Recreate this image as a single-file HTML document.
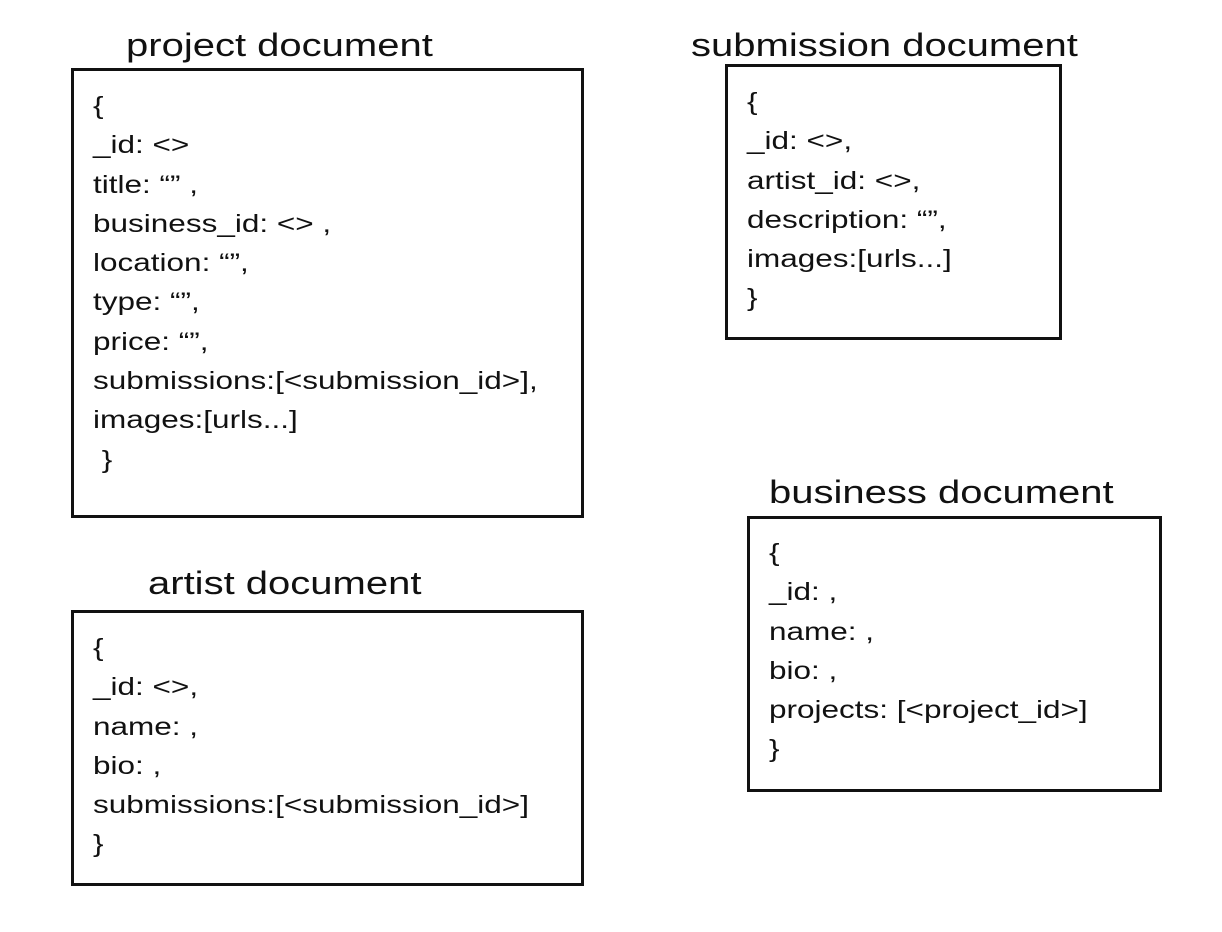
<!DOCTYPE html>
<html><head><meta charset="utf-8"><style>
body{margin:0;width:1222px;height:932px;background:#fff;position:relative;overflow:hidden;font-family:"Liberation Sans",sans-serif;color:#111}
.box{position:absolute;border:3px solid #111;box-sizing:border-box}
.t{position:absolute;font-size:32px;line-height:36px;white-space:nowrap;transform:scaleX(1.25);transform-origin:0 50%}
.b{position:absolute;font-size:25px;line-height:39.3px;white-space:pre;transform:scaleX(1.26);transform-origin:0 0}
</style></head><body>
<div class="t" style="left:126px;top:27px">project document</div>
<div class="box" style="left:71px;top:68px;width:513px;height:450px"></div>
<div class="b" style="left:93px;top:87px">{
_id: &lt;&gt;
title: “” ,
business_id: &lt;&gt; ,
location: “”,
type: “”,
price: “”,
submissions:[&lt;submission_id&gt;],
images:[urls...]
 }</div>

<div class="t" style="left:148px;top:565px">artist document</div>
<div class="box" style="left:71px;top:610px;width:513px;height:276px"></div>
<div class="b" style="left:93px;top:629px">{
_id: &lt;&gt;,
name: ,
bio: ,
submissions:[&lt;submission_id&gt;]
}</div>

<div class="t" style="left:691px;top:27px">submission document</div>
<div class="box" style="left:725px;top:64px;width:337px;height:276px"></div>
<div class="b" style="left:747px;top:83px">{
_id: &lt;&gt;,
artist_id: &lt;&gt;,
description: “”,
images:[urls...]
}</div>

<div class="t" style="left:769px;top:474px">business document</div>
<div class="box" style="left:747px;top:516px;width:415px;height:276px"></div>
<div class="b" style="left:769px;top:534px">{
_id: ,
name: ,
bio: ,
projects: [&lt;project_id&gt;]
}</div>
</body></html>
